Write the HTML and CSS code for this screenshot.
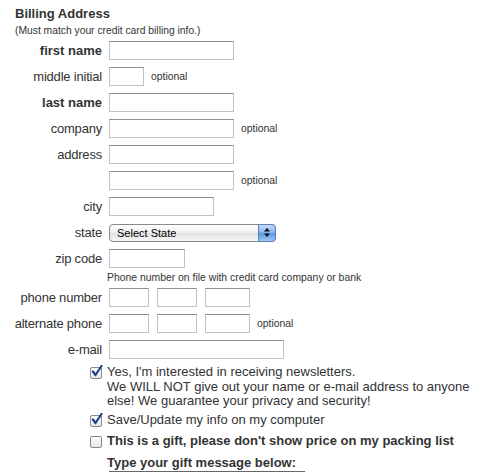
FILE: index.html
```html
<!DOCTYPE html>
<html lang="en">
<head>
  <meta charset="UTF-8">
  <title>Billing Address</title>
  <link rel="stylesheet" href="styles.css">
</head>
<body>
  <div class="billing">
    <h2 class="section-title">Billing Address</h2>
    <p class="section-note">(Must match your credit card billing info.)</p>

    <div class="row">
      <label class="req" for="firstName">first name</label>
      <div class="field"><input type="text" id="firstName" class="w-125"></div>
    </div>
    <div class="row">
      <label for="middleInitial">middle initial</label>
      <div class="field"><input type="text" id="middleInitial" class="w-35"><span class="optional">optional</span></div>
    </div>
    <div class="row">
      <label class="req" for="lastName">last name</label>
      <div class="field"><input type="text" id="lastName" class="w-125"></div>
    </div>
    <div class="row">
      <label for="company">company</label>
      <div class="field"><input type="text" id="company" class="w-125"><span class="optional">optional</span></div>
    </div>
    <div class="row">
      <label for="address1">address</label>
      <div class="field"><input type="text" id="address1" class="w-125"></div>
    </div>
    <div class="row">
      <label for="address2"></label>
      <div class="field"><input type="text" id="address2" class="w-125"><span class="optional">optional</span></div>
    </div>
    <div class="row">
      <label for="city">city</label>
      <div class="field"><input type="text" id="city" class="w-105"></div>
    </div>
    <div class="row">
      <label for="state">state</label>
      <div class="field">
        <div class="select">
          <select id="state">
            <option selected>Select State</option>
          </select>
          <span class="select-arrow">
            <svg width="8" height="11" viewBox="0 0 8 11"><path d="M4 1 L7 4.5 L1 4.5 Z M4 10 L7 6.5 L1 6.5 Z" fill="#111"/></svg>
          </span>
        </div>
      </div>
    </div>
    <div class="row">
      <label for="zip">zip code</label>
      <div class="field"><input type="text" id="zip" class="w-76"></div>
    </div>
    <div class="row hint-row">
      <span></span>
      <div class="hint">Phone number on file with credit card company or bank</div>
    </div>
    <div class="row">
      <label for="phone1">phone number</label>
      <div class="field phone">
        <input type="text" id="phone1" class="w-40">
        <input type="text" class="w-40">
        <input type="text" class="w-45">
      </div>
    </div>
    <div class="row">
      <label for="altPhone1">alternate phone</label>
      <div class="field phone">
        <input type="text" id="altPhone1" class="w-40">
        <input type="text" class="w-40">
        <input type="text" class="w-45">
        <span class="optional">optional</span>
      </div>
    </div>
    <div class="row">
      <label for="email">e-mail</label>
      <div class="field"><input type="text" id="email" class="w-175"></div>
    </div>

    <div class="checks">
      <label class="check">
        <span class="box"><svg width="14" height="14" viewBox="0 0 14 14"><path d="M3 6.5 L5.5 10 L11.5 1" fill="none" stroke="#1d3f8f" stroke-width="2.2" stroke-linecap="round" stroke-linejoin="round"/></svg></span>
        <span class="check-text">Yes, I'm interested in receiving newsletters.<br>We WILL NOT give out your name or e-mail address to anyone else! We guarantee your privacy and security!</span>
      </label>
      <label class="check save">
        <span class="box"><svg width="14" height="14" viewBox="0 0 14 14"><path d="M3 6.5 L5.5 10 L11.5 1" fill="none" stroke="#1d3f8f" stroke-width="2.2" stroke-linecap="round" stroke-linejoin="round"/></svg></span>
        <span class="check-text">Save/Update my info on my computer</span>
      </label>
      <label class="check gift">
        <span class="box"></span>
        <span class="check-text">This is a gift, please don't show price on my packing list</span>
      </label>
      <div class="gift-message">
        <p class="gift-title">Type your gift message below:</p>
        <textarea class="gift-text"></textarea>
      </div>
    </div>
  </div>
</body>
</html>
```

FILE: styles.css
```css
body {
  margin: 0;
  background: #ffffff;
  color: #333;
  font-family: "Liberation Sans", Arial, Helvetica, sans-serif;
  font-size: 13px;
  height: 472px;
  overflow: hidden;
}

.billing {
  padding-top: 6px;
}

.section-title {
  margin: 0 0 0 15px;
  font-size: 13px;
  line-height: 16px;
  font-weight: bold;
  color: #333;
}

.section-note {
  margin: 3px 0 0 15px;
  font-size: 10.3px;
  line-height: 11px;
}

.row {
  display: grid;
  grid-template-columns: 102px auto;
  column-gap: 7px;
  align-items: center;
  margin-top: 7px;
}

.row:first-of-type {
  margin-top: 5px;
}

.row label {
  text-align: right;
  line-height: 19px;
  letter-spacing: -0.2px;
  white-space: nowrap;
}

.row label.req {
  font-weight: bold;
  letter-spacing: 0;
}

.field {
  display: flex;
  align-items: center;
  height: 19px;
}

.field.phone {
  gap: 8px;
}

input[type="text"] {
  box-sizing: border-box;
  height: 19px;
  margin: 0;
  padding: 1px 3px;
  border: 1px solid #c2c2c2;
  border-top-color: #8c8c8c;
  background: #fff;
  font-family: inherit;
  font-size: 12px;
}

.w-35 { width: 35px; }
.w-40 { width: 40px; }
.w-45 { width: 45px; }
.w-76 { width: 76px; }
.w-105 { width: 105px; }
.w-125 { width: 125px; }
.w-175 { width: 175px; }

.optional {
  margin-left: 7px;
  font-size: 10.4px;
}

.field.phone .optional {
  margin-left: -1px;
}

.select {
  position: relative;
  width: 167px;
  height: 18px;
}

.select select {
  appearance: none;
  -webkit-appearance: none;
  box-sizing: border-box;
  width: 100%;
  height: 18px;
  margin: 0;
  padding: 0 0 0 7px;
  border: 1px solid #8a8a8a;
  border-radius: 4px;
  background: linear-gradient(#ffffff, #f1f1f1 45%, #e2e2e2 55%, #f7f7f7);
  color: #000;
  font-family: "Liberation Sans", Arial, sans-serif;
  font-size: 11px;
  line-height: 16px;
}

.select-arrow {
  position: absolute;
  top: 0;
  right: 0;
  box-sizing: border-box;
  width: 18px;
  height: 18px;
  display: flex;
  align-items: center;
  justify-content: center;
  border: 1px solid #5b7fb8;
  border-radius: 0 4px 4px 0;
  background: linear-gradient(#c6dcf7, #8ab6ec 45%, #5d98e4 55%, #9fcaf6);
  pointer-events: none;
}

.hint-row {
  margin-top: 3px;
}

.hint {
  margin-left: -2px;
  font-size: 10.4px;
  line-height: 14px;
  white-space: nowrap;
}

.hint-row + .row {
  margin-top: 3px;
}

.checks {
  margin: 6px 0 0 90px;
}

.check {
  display: flex;
  align-items: flex-start;
  gap: 5px;
  line-height: 14.5px;
}

.box {
  flex: none;
  position: relative;
  box-sizing: border-box;
  width: 12px;
  height: 12px;
  margin-top: 2px;
  border: 1px solid #888;
  border-radius: 2px;
  background: linear-gradient(#ffffff, #e6e6e6);
}

.box svg {
  position: absolute;
  left: -1px;
  top: -3px;
}

.check.save {
  margin-top: 4px;
}

.check.gift {
  margin-top: 7px;
  font-weight: bold;
}

.gift-message {
  margin: 6px 0 0 17px;
}

.gift-title {
  margin: 0;
  font-weight: bold;
  line-height: 15px;
}

.gift-text {
  display: block;
  box-sizing: border-box;
  width: 196px;
  height: 2px;
  margin: 1px 0 0 2px;
  padding: 0;
  border: 0;
  border-top: 1px solid #666;
  resize: none;
}
```
